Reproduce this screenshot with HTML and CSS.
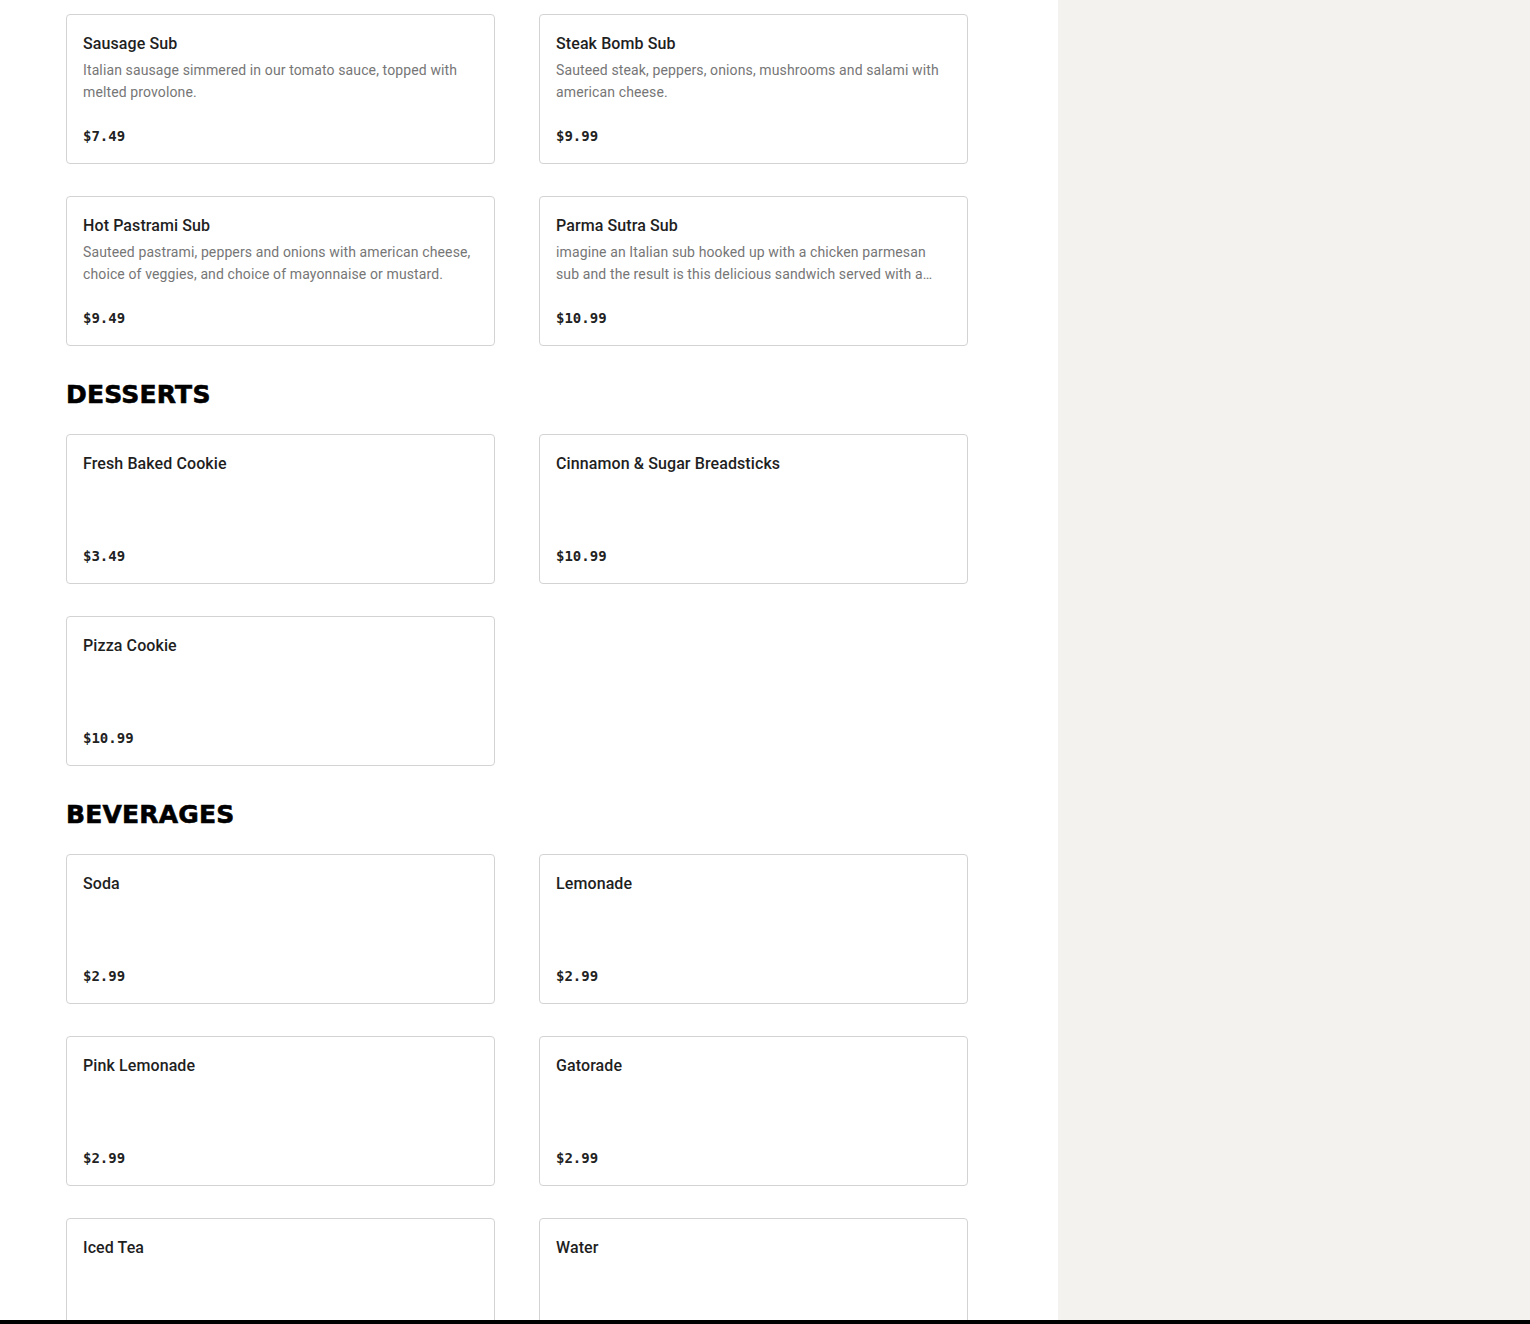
FILE: index.html
```html
<!DOCTYPE html>
<html lang="en">
<head>
<meta charset="utf-8">
<title>Menu</title>
<link rel="stylesheet" href="styles.css">
</head>
<body>
<div class="layout">
  <main class="menu">
    <section class="section first">
      <div class="grid">
        <article class="card">
          <h3 class="title">Sausage Sub</h3>
          <p class="desc">Italian sausage simmered in our tomato sauce, topped with melted provolone.</p>
          <div class="price">$7.49</div>
        </article>
        <article class="card">
          <h3 class="title">Steak Bomb Sub</h3>
          <p class="desc">Sauteed steak, peppers, onions, mushrooms and salami with american cheese.</p>
          <div class="price">$9.99</div>
        </article>
        <article class="card">
          <h3 class="title">Hot Pastrami Sub</h3>
          <p class="desc">Sauteed pastrami, peppers and onions with american cheese, choice of veggies, and choice of mayonnaise or mustard.</p>
          <div class="price">$9.49</div>
        </article>
        <article class="card">
          <h3 class="title">Parma Sutra Sub</h3>
          <p class="desc">imagine an Italian sub hooked up with a chicken parmesan sub and the result is this delicious sandwich served with a side of marinara sauce.</p>
          <div class="price">$10.99</div>
        </article>
      </div>
    </section>
    <section class="section">
      <h2 class="heading">DESSERTS</h2>
      <div class="grid">
        <article class="card">
          <h3 class="title">Fresh Baked Cookie</h3>
          <div class="price">$3.49</div>
        </article>
        <article class="card">
          <h3 class="title">Cinnamon &amp; Sugar Breadsticks</h3>
          <div class="price">$10.99</div>
        </article>
        <article class="card">
          <h3 class="title">Pizza Cookie</h3>
          <div class="price">$10.99</div>
        </article>
      </div>
    </section>
    <section class="section">
      <h2 class="heading">BEVERAGES</h2>
      <div class="grid">
        <article class="card">
          <h3 class="title">Soda</h3>
          <div class="price">$2.99</div>
        </article>
        <article class="card">
          <h3 class="title">Lemonade</h3>
          <div class="price">$2.99</div>
        </article>
        <article class="card">
          <h3 class="title">Pink Lemonade</h3>
          <div class="price">$2.99</div>
        </article>
        <article class="card">
          <h3 class="title">Gatorade</h3>
          <div class="price">$2.99</div>
        </article>
        <article class="card">
          <h3 class="title">Iced Tea</h3>
          <div class="price">$2.99</div>
        </article>
        <article class="card">
          <h3 class="title">Water</h3>
          <div class="price">$2.99</div>
        </article>
      </div>
    </section>
  </main>
  <aside class="side"></aside>
</div>
<div class="bottom-bar"></div>
</body>
</html>
```
FILE: styles.css
```css
* { box-sizing: border-box; }
html, body { margin: 0; padding: 0; }
body {
  font-family: Roboto, "Liberation Sans", sans-serif;
  background: #ffffff;
  color: #222222;
}
.layout {
  display: grid;
  grid-template-columns: 1058px 1fr;
  min-height: 100vh;
}
.menu {
  padding: 14px 90px 40px 66px;
}
.side {
  background: #f3f2ee;
}
.section { padding-top: 34px; }
.section.first { padding-top: 0; }
.heading {
  margin: 0 0 24px 0;
  font-family: "DejaVu Sans", sans-serif;
  font-weight: 700;
  font-size: 25px;
  line-height: 30px;
  color: #000000;
  letter-spacing: 0.2px;
  -webkit-text-stroke: 0.6px #000000;
}
.grid {
  display: grid;
  grid-template-columns: 429px 429px;
  column-gap: 44px;
  row-gap: 32px;
}
.card {
  height: 150px;
  border: 1px solid #d3d3d3;
  border-radius: 4px;
  padding: 17px 16px 15px 16px;
  display: flex;
  flex-direction: column;
  background: #ffffff;
}
.title {
  margin: 0;
  font-size: 16px;
  line-height: 24px;
  font-weight: 500;
  color: #1f1f1f;
  letter-spacing: 0.1px;
}
.desc {
  margin: 3px 0 0 0;
  font-size: 14px;
  line-height: 22px;
  color: #767676;
  letter-spacing: 0.12px;
  display: -webkit-box;
  -webkit-line-clamp: 2;
  -webkit-box-orient: vertical;
  overflow: hidden;
}
.price {
  margin-top: auto;
  font-family: "DejaVu Sans Mono", "Liberation Mono", monospace;
  font-weight: 700;
  font-size: 14px;
  line-height: 24px;
  color: #222222;
}
.bottom-bar {
  position: fixed;
  left: 0;
  right: 0;
  bottom: 0;
  height: 4px;
  background: #000000;
}
```
